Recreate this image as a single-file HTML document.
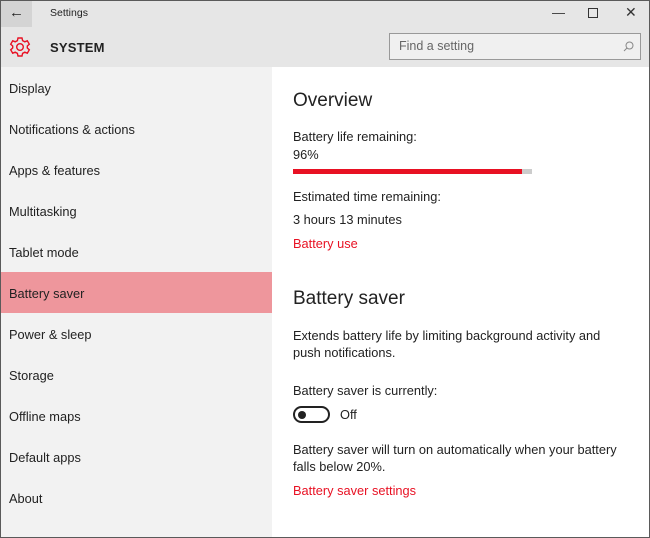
<!DOCTYPE html>
<html><head><meta charset="utf-8"><style>
*{margin:0;padding:0;box-sizing:border-box}
body{width:650px;height:538px;overflow:hidden;font-family:"Liberation Sans",sans-serif;background:#fff;position:relative;color:#222}
.win{position:absolute;inset:0;border:1px solid #5a5a5a}
.title{position:absolute;left:0;top:0;width:650px;height:27px;background:#e6e6e6}
.back{position:absolute;left:1px;top:1px;width:31px;height:26px;background:#d4d4d4;font-size:15px;text-align:center;line-height:24px}
.title .t{position:absolute;left:50px;top:7px;font-size:10.5px}
.ctl{position:absolute;top:5px;font-size:13px;color:#333}
.hdr{position:absolute;left:0;top:27px;width:650px;height:40px;background:#e6e6e6}
.sys{position:absolute;left:50px;top:13px;font-size:13px;font-weight:bold;letter-spacing:.2px}
.search{position:absolute;left:389px;top:6px;width:252px;height:27px;border:1px solid #999;background:#f0f0f0;font-size:12.5px;color:#666;padding:5px 9px}
.side{position:absolute;left:1px;top:67px;width:271px;height:470px;background:#f2f2f2}
.side div{height:41px;line-height:43px;padding-left:8px;font-size:12.8px;color:#222}
.side .sel{background:#ee969c}
.main{position:absolute;left:293px;top:67px;font-size:12.8px}
.main p{position:absolute;white-space:nowrap}
h2{position:absolute;font-weight:normal;font-size:19px;white-space:nowrap;color:#222}
.red{color:#e81123}
</style></head><body>
<div class="title"><div class="back">&#8592;</div><span class="t">Settings</span>
<span class="ctl" style="left:552px">&#8212;</span>
<span style="position:absolute;left:588px;top:8px;width:10px;height:10px;border:1px solid #333"></span>
<span class="ctl" style="left:625px;font-size:14px;top:4px">&#10005;</span></div>
<div class="hdr">
<svg style="position:absolute;left:9px;top:9px" width="22" height="22" viewBox="0 0 22 22"><g fill="none" stroke="#e81123" stroke-width="1.4"><path d="M9 2h4l.6 2.6 2.2 1.2 2.5-1 2 3.4-2 1.8v2l2 1.8-2 3.4-2.5-1-2.2 1.2L13 20H9l-.6-2.6-2.2-1.2-2.5 1-2-3.4 2-1.8v-2l-2-1.8 2-3.4 2.5 1 2.2-1.2z"/><circle cx="11" cy="11" r="3.3"/></g></svg>
<span class="sys">SYSTEM</span>
<div class="search">Find a setting<svg style="position:absolute;right:6px;top:7px" width="11" height="11" viewBox="0 0 11 11"><circle cx="6.5" cy="4.5" r="3.5" fill="none" stroke="#888"/><path d="M4 7L1 10" stroke="#888"/></svg></div>
</div>
<div class="side">
<div>Display</div><div>Notifications &amp; actions</div><div>Apps &amp; features</div><div>Multitasking</div><div>Tablet mode</div><div class="sel">Battery saver</div><div>Power &amp; sleep</div><div>Storage</div><div>Offline maps</div><div>Default apps</div><div>About</div>
</div>
<div class="main">
<h2 style="top:23px">Overview</h2>
<p style="top:62px">Battery life remaining:</p>
<p style="top:80px">96%</p>
<div style="position:absolute;top:102px;left:0;width:239px;height:5px;background:#ccc"><div style="width:229px;height:5px;background:#e81123"></div></div>
<p style="top:122px">Estimated time remaining:</p>
<p style="top:145px">3 hours 13 minutes</p>
<p class="red" style="top:169px">Battery use</p>
<h2 style="top:221px">Battery saver</h2>
<p style="top:261px">Extends battery life by limiting background activity and</p>
<p style="top:278px">push notifications.</p>
<p style="top:316px">Battery saver is currently:</p>
<div style="position:absolute;top:339px;left:0;width:37px;height:17px;border:2px solid #222;border-radius:9px"><div style="position:absolute;left:3px;top:2.5px;width:8px;height:8px;border-radius:50%;background:#222"></div></div>
<p style="top:340px;left:47px">Off</p>
<p style="top:375px">Battery saver will turn on automatically when your battery</p>
<p style="top:392px">falls below 20%.</p>
<p class="red" style="top:416px">Battery saver settings</p>
</div>
<div class="win"></div>
</body></html>
